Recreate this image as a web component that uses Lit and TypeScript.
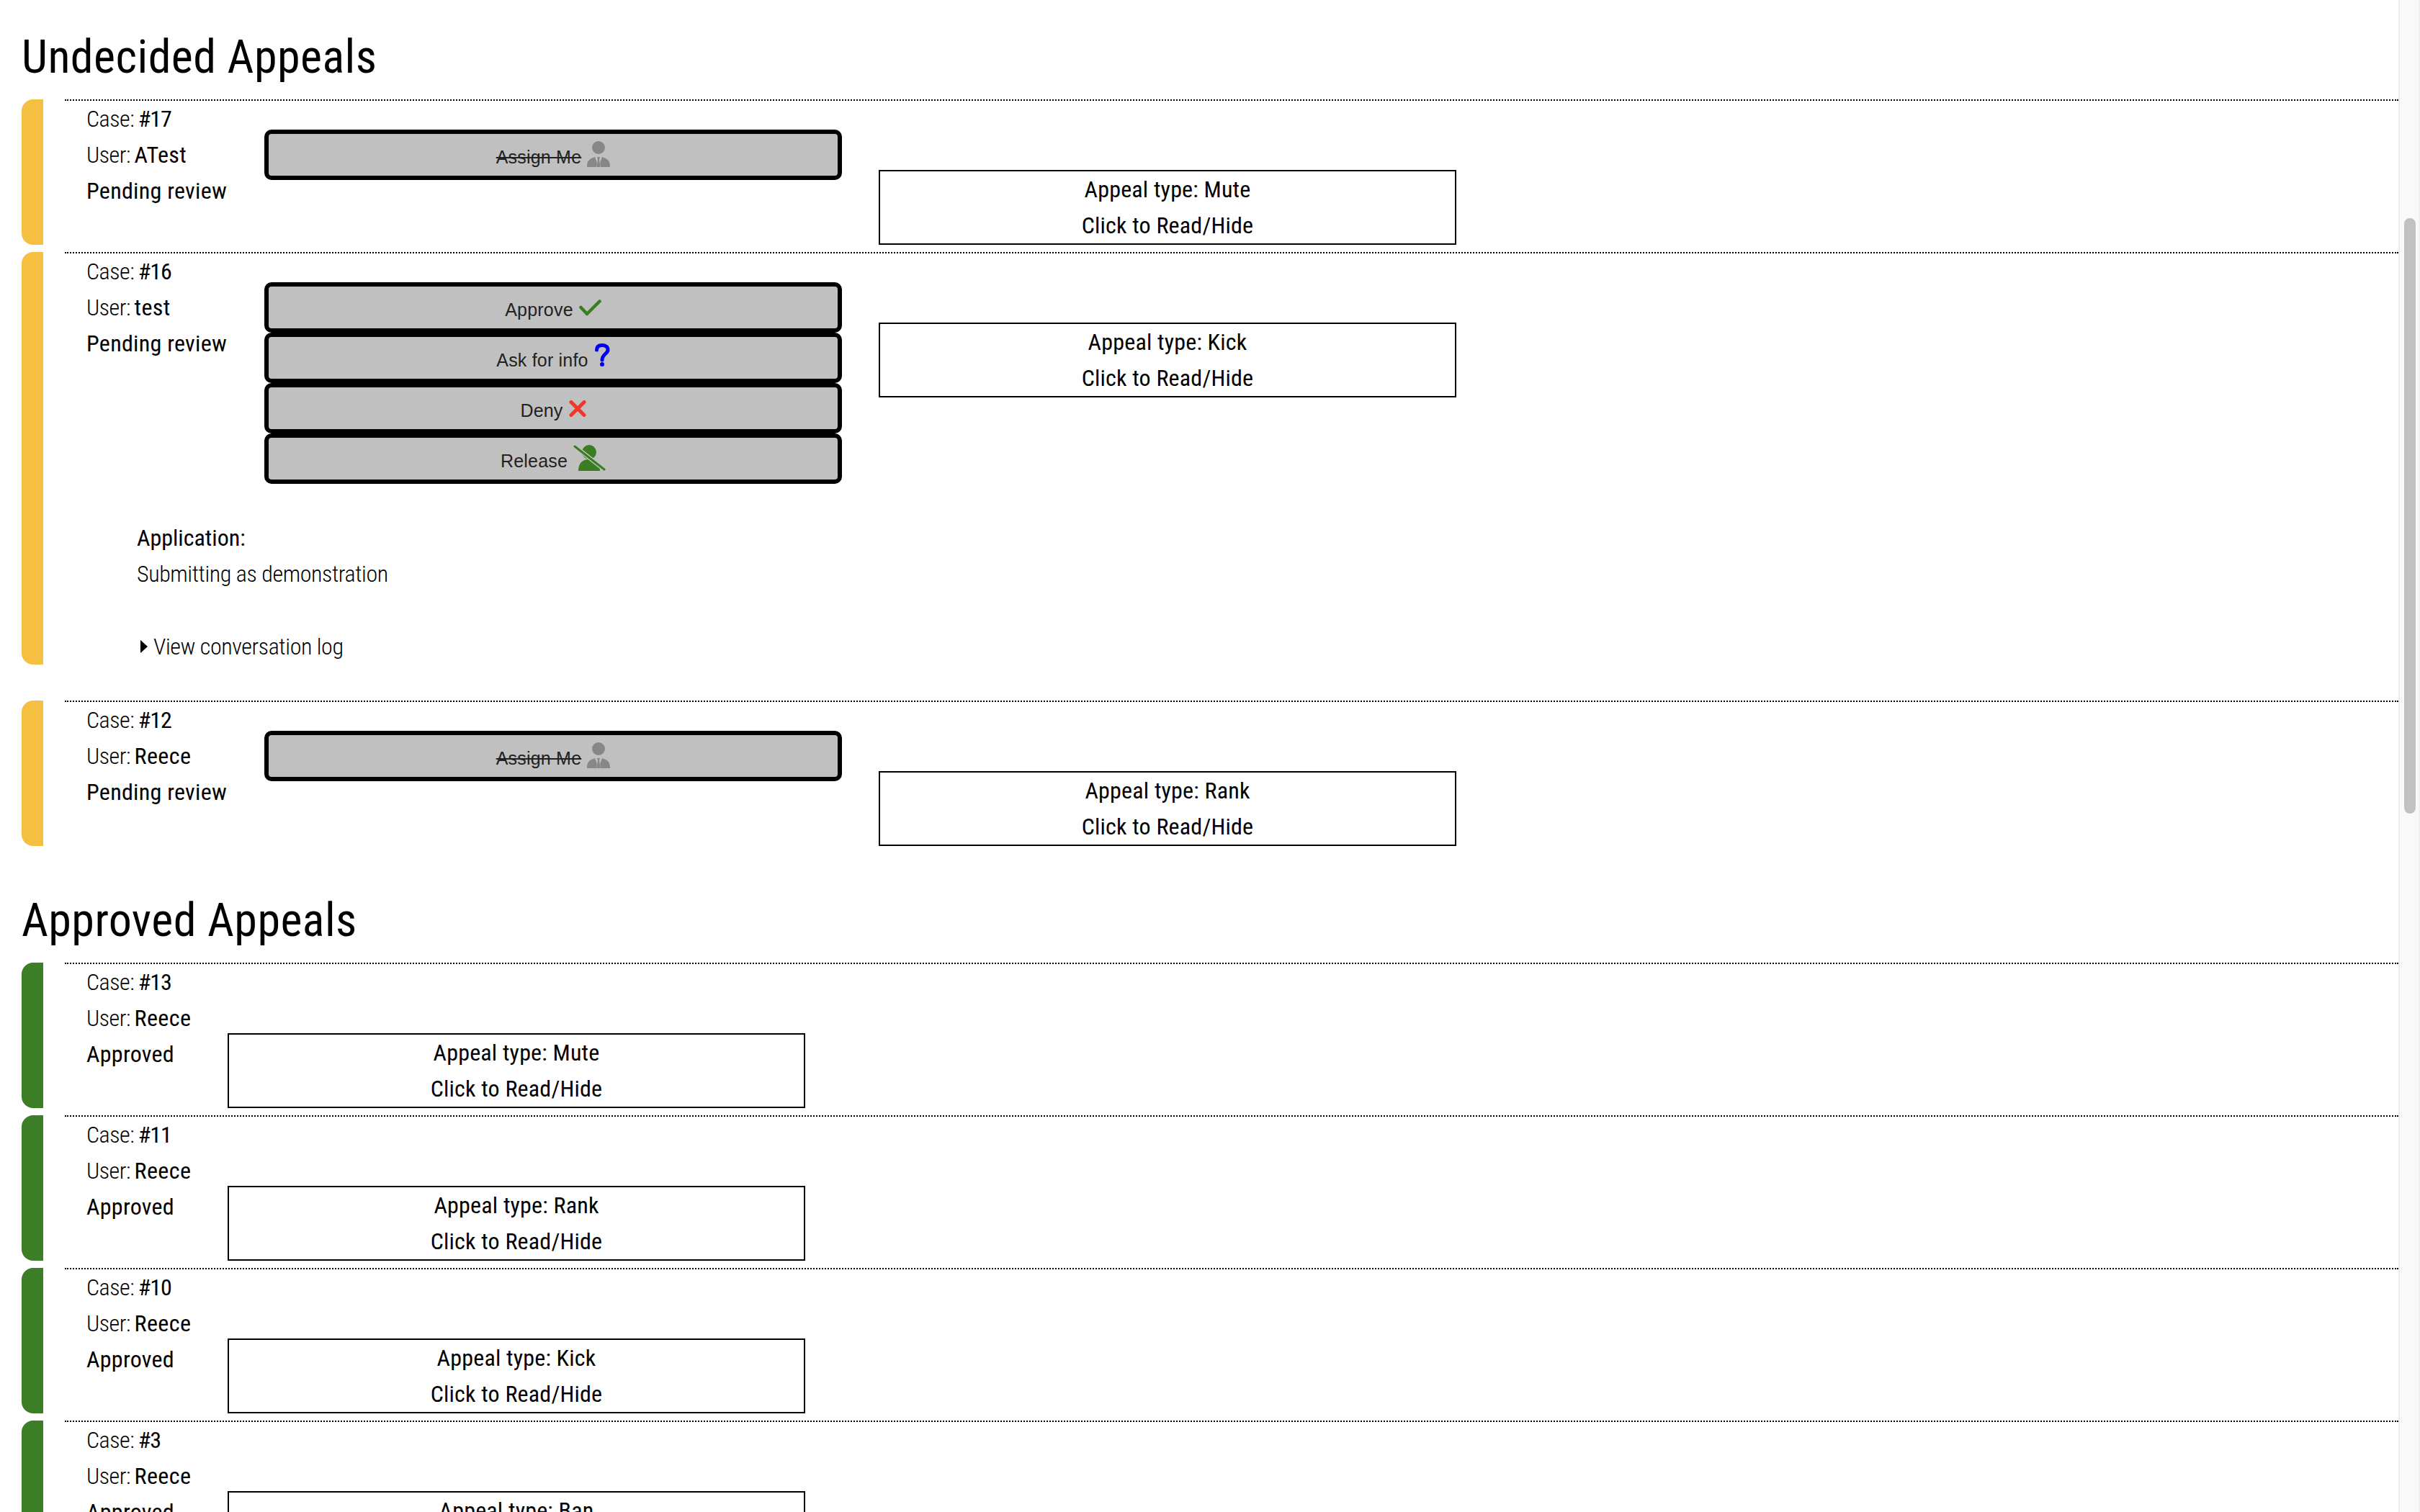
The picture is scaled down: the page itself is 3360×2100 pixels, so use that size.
import { LitElement, css, html, nothing, svg } from 'lit';
import { customElement } from 'lit/decorators.js';

type Appeal = {
  id: number;
  user: string;
  type: string;
  actions?: 'assign' | 'review';
  application?: string;
};

const undecided: Appeal[] = [
  { id: 17, user: 'ATest', type: 'Mute', actions: 'assign' },
  { id: 16, user: 'test', type: 'Kick', actions: 'review', application: 'Submitting as demonstration' },
  { id: 12, user: 'Reece', type: 'Rank', actions: 'assign' }
];

const approved: Appeal[] = [
  { id: 13, user: 'Reece', type: 'Mute' },
  { id: 11, user: 'Reece', type: 'Rank' },
  { id: 10, user: 'Reece', type: 'Kick' },
  { id: 3, user: 'Reece', type: 'Ban' }
];

const personIcon = html`<svg class="icon person" width="32" height="36" viewBox="0 0 32 36">
  <circle cx="16" cy="9" r="9" fill="#878787"></circle>
  <path fill="#878787" d="M0 36 C0 28 2 25 11 22 L14 30 L13 36 Z M32 36 C32 28 30 25 21 22 L18 30 L19 36 Z M14 22 H18 L17 25 L18.500 36 H13.500 L15 25 Z"></path>
</svg>`;

const checkIcon = html`<svg class="icon" width="31" height="23" viewBox="0 0 31 23">
  <path d="M2.500 11 L11 20 L28.500 2.500" fill="none" stroke="#3a7d22" stroke-width="4.500" stroke-linecap="round" stroke-linejoin="round"></path>
</svg>`;

const questionIcon = html`<svg class="icon" width="22" height="32" viewBox="0 0 22 32">
  <path d="M3.500 9 C3.500 4 7 2.500 11 2.500 C16 2.500 19 5 19 9 C19 14 11 15 11 23" fill="none" stroke="#0000f5" stroke-width="5" stroke-linecap="round"></path>
  <circle cx="11" cy="29" r="3" fill="#0000f5"></circle>
</svg>`;

const crossIcon = html`<svg class="icon" width="24" height="23" viewBox="0 0 24 23">
  <path d="M3 2.500 L21 20.500 M21 2.500 L3 20.500" fill="none" stroke="#f0352a" stroke-width="5" stroke-linecap="round"></path>
</svg>`;

const releaseIcon = html`<svg class="icon person" width="45" height="36" viewBox="0 0 45 36">
  <circle cx="22" cy="10" r="10" fill="#3a7d22"></circle>
  <path d="M7 36 C7 26 12 20 22 20 C32 20 37 26 37 36 Z" fill="#3a7d22"></path>
  ${svg`<path d="M2 2 L43 34" stroke="#c0c0c0" stroke-width="6"></path>
  <path d="M2 2 L43 34" stroke="#3a7d22" stroke-width="3" stroke-linecap="round"></path>`}
</svg>`;

@customElement('app-root')
export class AppRoot extends LitElement {
  static styles = css`
    :host {
      display: flex;
      width: 3360px;
      height: 2100px;
      overflow: hidden;
      background: #fff;
      color: #000;
      font-family: Roboto, "Liberation Sans", sans-serif;
      font-stretch: 75%;
      font-weight: 340;
      font-size: 32px;
      line-height: 50px;
    }

    .page {
      flex: 1 1 auto;
      min-width: 0;
      padding-left: 30px;
    }

    .section-title {
      margin: 0 0 18px;
      padding-top: 40px;
      font-size: 64px;
      line-height: 80px;
      font-weight: 400;
      letter-spacing: 0.45px;
    }

    .section + .section .section-title {
      padding-top: 54px;
    }

    .appeal {
      display: flex;
      margin-bottom: 10px;
    }

    .appeal.expanded {
      margin-bottom: 50px;
    }

    .bar {
      flex: 0 0 30px;
      border-radius: 16px 0 0 16px;
    }

    .bar.pending { background: #f5c042; }
    .bar.done { background: #3b7e25; }

    .body {
      flex: 1 1 auto;
      margin-left: 30px;
      padding-left: 30px;
      border-top: 2px dotted #000;
    }

    .head {
      display: flex;
      align-items: flex-start;
    }

    .meta {
      flex: 0 0 auto;
    }

    .meta.wide { width: 247px; }
    .meta.narrow { width: 196px; }

    .line {
      letter-spacing: -0.5px;
      word-spacing: -1px;
    }

    .case-id {
      font-weight: 400;
      letter-spacing: -1px;
    }

    .user-name {
      font-weight: 400;
      letter-spacing: 0.4px;
    }

    .status {
      font-weight: 400;
      letter-spacing: 0.3px;
    }

    .actions {
      flex: 0 0 802px;
      margin: 40px 51px 0 0;
    }

    .action {
      display: block;
      box-sizing: border-box;
      width: 802px;
      height: 70px;
      padding: 5px 0 0;
      border: 6px solid #000;
      border-radius: 10px;
      background: #c0c0c0;
      color: #222;
      font-family: "Liberation Sans", sans-serif;
      font-stretch: normal;
      font-weight: 400;
      font-size: 25px;
      letter-spacing: 0.2px;
      line-height: 54px;
      text-align: center;
    }

    .action s { text-decoration-thickness: 2px; }

    .icon {
      margin-left: 8px;
      vertical-align: 0;
    }

    .icon.person { vertical-align: -5px; }

    .type-box {
      flex: 0 0 auto;
      box-sizing: border-box;
      width: 802px;
      height: 104px;
      margin-top: 96px;
      border: 2px solid #000;
      font-weight: 400;
      letter-spacing: 0.2px;
      text-align: center;
    }

    .application {
      padding: 50px 0 0 70px;
      letter-spacing: -0.4px;
    }

    .application-label {
      font-weight: 400;
      letter-spacing: 0;
    }

    .application p {
      margin: 0 0 51px;
    }

    .log {
      display: flex;
      align-items: center;
      gap: 8px;
      padding-left: 5px;
    }

    .caret {
      width: 0;
      height: 0;
      border-style: solid;
      border-width: 9px 0 9px 10px;
      border-color: transparent transparent transparent #000;
    }

    .scrollbar {
      flex: 0 0 30px;
      box-sizing: border-box;
      padding: 303px 4px 0 6px;
      border-left: 2px solid #ececec;
      border-right: 2px solid #f0f0f0;
      background: #f9f9f9;
    }

    .thumb {
      height: 827px;
      border-radius: 8px;
      background: #c1c1c1;
    }
  `;

  private renderActions(appeal: Appeal) {
    if (appeal.actions === 'assign') {
      return html`<div class="actions">
        <button class="action" type="button"><s>Assign Me</s>${personIcon}</button>
      </div>`;
    }
    return html`<div class="actions">
      <button class="action" type="button">Approve${checkIcon}</button>
      <button class="action" type="button">Ask for info${questionIcon}</button>
      <button class="action" type="button">Deny${crossIcon}</button>
      <button class="action" type="button">Release${releaseIcon}</button>
    </div>`;
  }

  private renderAppeal(appeal: Appeal, status: string, barClass: string) {
    return html`<article class="appeal ${appeal.application ? 'expanded' : ''}">
      <div class="bar ${barClass}"></div>
      <div class="body">
        <div class="head">
          <div class="meta ${appeal.actions ? 'wide' : 'narrow'}">
            <div class="line">Case: <span class="case-id">#${appeal.id}</span></div>
            <div class="line">User: <span class="user-name">${appeal.user}</span></div>
            <div class="status">${status}</div>
          </div>
          ${appeal.actions ? this.renderActions(appeal) : nothing}
          <div class="type-box">
            <div>Appeal type: ${appeal.type}</div>
            <div>Click to Read/Hide</div>
          </div>
        </div>
        ${appeal.application
          ? html`<div class="application">
              <div class="application-label">Application:</div>
              <p>${appeal.application}</p>
              <div class="log"><span class="caret"></span>View conversation log</div>
            </div>`
          : nothing}
      </div>
    </article>`;
  }

  protected render() {
    return html`
      <main class="page">
        <section class="section">
          <h2 class="section-title">Undecided Appeals</h2>
          ${undecided.map((a) => this.renderAppeal(a, 'Pending review', 'pending'))}
        </section>
        <section class="section">
          <h2 class="section-title">Approved Appeals</h2>
          ${approved.map((a) => this.renderAppeal(a, 'Approved', 'done'))}
        </section>
      </main>
      <div class="scrollbar"><div class="thumb"></div></div>
    `;
  }
}
